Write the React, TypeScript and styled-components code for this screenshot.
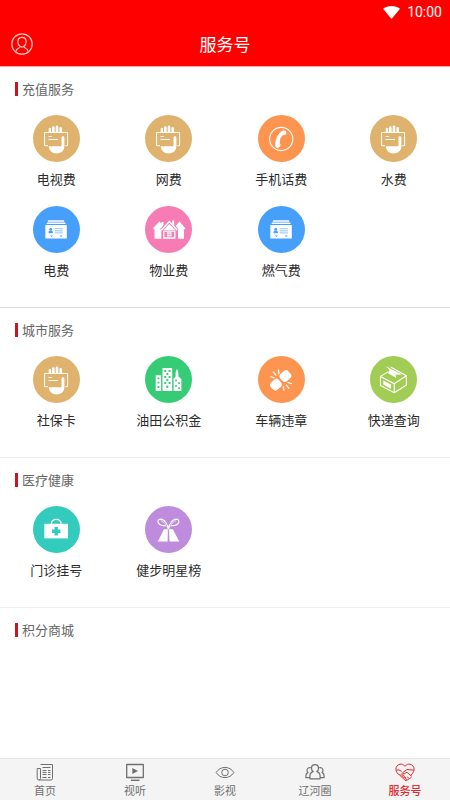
import React from "react";
import styled, { createGlobalStyle } from "styled-components";

const GlobalStyle = createGlobalStyle`
  *, *::before, *::after { box-sizing: border-box; }
  body {
    margin: 0;
    background: #fff;
    font-family: "Noto Sans CJK SC", "Noto Sans", sans-serif;
  }
  button { font: inherit; border: 0; padding: 0; background: none; cursor: pointer; }
  ul { list-style: none; margin: 0; padding: 0; }
`;

const Page = styled.div`
  min-height: 100vh;
  display: flex;
  flex-direction: column;
  background: #fff;
`;

const Header = styled.header`
  background: #ff0000;
  color: #fff;
  border-bottom: 1px solid #ffa9a2;
`;

const StatusBar = styled.div`
  display: flex;
  align-items: center;
  justify-content: flex-end;
  gap: 7px;
  height: 22px;
  padding: 2px 8px 0 0;
  font: 400 14px/20px Roboto, sans-serif;
`;

const TitleBar = styled.div`
  display: grid;
  grid-template-columns: 22px 1fr 22px;
  align-items: center;
  height: 44px;
  padding: 0 11px;
`;

const ProfileButton = styled.button`
  display: flex;
  color: #ffc4bc;
`;

const Title = styled.h1`
  margin: 0;
  text-align: center;
  font-size: 17px;
  line-height: 24px;
  font-weight: 400;
`;

const Main = styled.main`
  flex: 1;
`;

const Section = styled.section<{ $strong?: boolean }>`
  padding: 11px 0 26px;
  border-bottom: 1px solid ${(p) => (p.$strong ? "#dcdcdc" : "#ededed")};
  &:last-child { border-bottom: 0; }
`;

const SectionTitle = styled.h2`
  display: flex;
  align-items: center;
  gap: 4px;
  margin: 0;
  padding-left: 15px;
  font-size: 13px;
  line-height: 22px;
  font-weight: 400;
  color: #666;
  &::before {
    content: "";
    width: 3px;
    height: 14px;
    background: #cc1420;
  }
`;

const ServiceGrid = styled.ul`
  display: grid;
  grid-template-columns: repeat(4, 1fr);
  row-gap: 16px;
  margin-top: 15px;
`;

const ServiceButton = styled.button`
  display: flex;
  flex-direction: column;
  align-items: center;
  gap: 6px;
  width: 100%;
  font-size: 13px;
  line-height: 22px;
  color: #2b2b2b;
`;

const Disc = styled.span<{ $color: string }>`
  display: flex;
  width: 47px;
  height: 47px;
  border-radius: 50%;
  color: ${(p) => p.$color};
  background: ${(p) => p.$color};
`;

const TabBar = styled.nav`
  position: sticky;
  bottom: 0;
  display: grid;
  grid-template-columns: repeat(5, 1fr);
  height: 42px;
  background: #f4f4f4;
  border-top: 1px solid #e6e6e6;
`;

const Tab = styled.a<{ $active?: boolean }>`
  display: flex;
  flex-direction: column;
  align-items: center;
  padding-top: 4px;
  font-size: 11px;
  line-height: 16px;
  text-decoration: none;
  font-weight: ${(p) => (p.$active ? 500 : 400)};
  color: ${(p) => (p.$active ? "#e02b2f" : "#707070")};
`;

const Glyph = ({ children }: { children: React.ReactNode }) => (
  <svg width="47" height="47" viewBox="0 0 47 47" fill="#fff" aria-hidden="true">
    {children}
  </svg>
);

const CardHand = () => (
  <Glyph>
    <path d="M15.700 17v-3a1.200 1.200 0 0 1 2.400 0v3zM19 17v-4.400a1.300 1.300 0 0 1 2.600 0V17zM22.700 17v-5.200a1.300 1.300 0 0 1 2.600 0V17zM26.500 17v-3.900a1.200 1.200 0 0 1 2.400 0V17z" />
    <path d="M15.700 31.200H28.500V22.800a1.400 1.400 0 0 1 2.900 0V31c0 4.200-3 7.400-7.700 7.400s-7.600-3-8-7.200z" />
    <path d="M15 30.700H11.600V17.500H34.600V30.700H32.400" fill="none" stroke="#fff" strokeWidth="1" />
    <path d="M15.500 21.500h3.600M15.500 24.500h9.500" stroke="#fff" strokeWidth="1" />
  </Glyph>
);

const Phone = () => (
  <Glyph>
    <circle cx="23.200" cy="24" r="11.600" fill="none" stroke="#fff" strokeWidth="1.100" />
    <path d="M23.300 16.600c1.200-1.100 3.600-1.500 4.600-.6.700.8.500 2.500-.1 3.500-.7 1-2.400.2-3.300 1-1.900 1.700-2.900 4.600-2.700 7.200.1 1 1 1.300.7 2.500-.4 1.400-1.800 2.800-3.300 2.700-2.300-.4-2.400-4.200-1.300-8.100 1-3.500 3-6.600 5.400-8.200z" />
  </Glyph>
);

const IdBox = () => (
  <Glyph>
    <path d="M15.300 14.300h15.600l.6 1.400H14.600zM14.200 16.600h17.800l.8 1.500H13.400zM12.300 19h21.500v13.500H12.300z" />
    <g fill="currentColor">
      <circle cx="17.700" cy="23.300" r="1.400" />
      <path d="M15.600 27.300v-1.200c0-1 1-1.500 2.100-1.500s2.100.5 2.100 1.500v1.200zM17 29.400h3l-1.500 1.700zM26.700 29.400h3l-1.500 1.700z" />
    </g>
    <path d="M21.700 22.700h8.200M21.700 24.800h8.200M21.700 26.900h8.200" stroke="currentColor" strokeWidth=".8" opacity=".75" />
  </Glyph>
);

const Houses = () => (
  <Glyph>
    <path d="M7.800 22.600 14.300 15.600l2.200 2.100V16h2v3.800l1.400 1.600-3.600 3.800v7.500H9.500v-9.300zM40.500 22.600 34.600 15.600 30 20.500l3 3.300v8.900h6v-9.300z" />
    <path d="M16.300 24.300 24.300 15.600l8 8.700M28.300 19v-4.300" fill="none" stroke="currentColor" strokeWidth="3.400" />
    <path d="M16.300 24.300 24.300 15.600l8 8.700" fill="none" stroke="#fff" strokeWidth="1.500" />
    <path d="M27.200 14.400h2v5.500l-2-2.100zM18.500 24.100l5.800-6.100 5.800 6.100z" />
    <path d="M18.800 25.200h11v6.800h-11z" fill="none" stroke="#fff" strokeWidth="1.300" />
    <path d="M22 26.200h4.600v4.200H22z" />
    <path d="M24.300 26.200v4.200M22 28.300h4.600" stroke="currentColor" strokeWidth=".5" />
  </Glyph>
);

const Buildings = () => (
  <Glyph>
    <path d="M10.700 19.300h5.400V35h-5.400zM17.500 12h9.700v23h-9.700zM28.600 22.500l2-2v-4l1.400-3.700 1.400 3.700v4l3 2.500V35h-7.800z" />
    <g fill="currentColor">
      <path d="M12.600 21.500h1.800v1.800h-1.800zM12.600 25.800h1.800v1.800h-1.800zM12.600 30.100h1.800v1.800h-1.800z" />
      <path d="M19.300 14h1.900v1.900h-1.900zM23.600 14h1.900v1.900h-1.900zM21.400 17h1.900v1.900h-1.900zM19.300 20h1.900v1.900h-1.900zM23.600 20h1.900v1.900h-1.900zM21.400 23h1.900v1.900h-1.900zM19.300 26h1.900v1.900h-1.900zM23.600 26h1.900v1.900h-1.900zM21.400 29.500h1.900V32h-1.900z" />
      <path d="M30.200 23.500h1.700v1.700h-1.700zM33.200 26.300h1.700V28h-1.700zM30.200 29h1.700v1.700h-1.700zM33.200 31.300h1.700V33h-1.700z" />
    </g>
  </Glyph>
);

const Collision = () => (
  <Glyph>
    <rect x="22" y="15.300" width="10.800" height="9.600" rx="3.400" transform="rotate(-42 27.400 20.100)" />
    <rect x="12.500" y="23.900" width="10.800" height="9.600" rx="3.400" transform="rotate(-42 17.900 28.700)" />
    <path d="M12.800 20.700l3.100 1.200M15.300 16l2.600 3.200M20.500 14.200l.4 3.700M25.300 30.500l.5 3.600M28.300 29.200l2.700 3.200M30 26.500l3.400 1.100" stroke="#fff" strokeWidth="1.300" strokeLinecap="round" />
  </Glyph>
);

const Parcel = () => (
  <Glyph>
    <g fill="none" stroke="#fff" strokeWidth="1.100" strokeLinejoin="round">
      <path d="M10.500 20.400 24.300 27.800 36.400 19.700V29L24.300 36.800 10.500 29.500zM24.300 27.800v9" />
      <path d="M10.500 20.400l8-4.800M36.400 19.700 23.400 12.400l-2.800-1.500" />
      <path d="M15.700 10.300 32 18.500l-6.400.2.700 3.300-8.200-4.800 1.400-3.300z" fill="#fff" stroke="none" />
    </g>
    <path d="M13.300 24.400l7.700 4.100v4.200l-7.700-4.100z" />
  </Glyph>
);

const Medkit = () => (
  <Glyph>
    <path d="M18.300 18.300c0-3.200 2-5 4.900-5s4.900 1.800 4.900 5" fill="none" stroke="#fff" strokeWidth="1.300" />
    <path d="M11.300 17.800H35v14.600H11.300z" />
    <path d="M21.500 21h3.400v2.500h2.500v3.400h-2.500v2.500h-3.400v-2.500H19v-3.400h2.500z" fill="currentColor" />
  </Glyph>
);

const Gift = () => (
  <Glyph>
    <path d="M19 23.200h3.900l-.3 12.200H12.800zM24 23.200h3.900l6.300 12.200h-9.700z" />
    <g fill="none" stroke="#fff" strokeWidth="1.100">
      <path d="M23.400 23.200c-.5-4.400-3.700-10-7.900-10.100-2.600 0-3.400 2.700-1.700 4.600 2 2.300 5.200 2.200 7.400 2.100M23.400 23.200c.5-4.400 3.700-10 7.900-10.100 2.600 0 3.400 2.700 1.700 4.600-2 2.300-5.200 2.200-7.400 2.100" />
      <path d="M21.900 19.800l1.500 3.400 1.500-3.400M15.800 14.700c1.900.4 3.600 2 4.700 4M31 14.700c-1.900.4-3.600 2-4.700 4" strokeWidth=".7" />
    </g>
  </Glyph>
);

const ProfileIcon = () => (
  <svg width="22" height="22" viewBox="0 0 22 22" fill="none" stroke="currentColor" strokeWidth="1.200" aria-hidden="true">
    <circle cx="11" cy="11" r="10.200" />
    <path d="M11 4.400c-2.600 0-4.200 1.900-4.200 4.300 0 2 .9 3.600 2.200 4.500 0 1.300-.5 1.600-1.500 2.100-1.300.7-2.400 1.500-2.700 3M11 4.400c2.600 0 4.200 1.900 4.200 4.300 0 2-.9 3.600-2.200 4.500 0 1.300.5 1.600 1.500 2.100 1.300.7 2.400 1.500 2.700 3M9 13.200c1.200.9 2.800.9 4 0" />
  </svg>
);

const WifiIcon = () => (
  <svg width="17" height="13" viewBox="0 0 17 13" fill="#fff" aria-hidden="true">
    <path d="M0 2.800C4.800-.8 12.200-.8 17 2.800L8.500 13z" />
  </svg>
);

const TabIcon = ({ children }: { children: React.ReactNode }) => (
  <svg width="20" height="19" viewBox="0 0 20 19" fill="none" stroke="currentColor" strokeWidth="1" strokeLinejoin="round" aria-hidden="true">
    {children}
  </svg>
);

const NewsIcon = () => (
  <TabIcon>
    <path d="M5.500 1.500h12V15.500q0 1.500-1.500 1.500H4q-1.800 0-1.800-1.800V5.500h3.300v10q0 1.300-1.500 1.500" />
    <path d="M7.500 4.500h8M7.500 7.500h4M13 7.500h2.500M7.500 9.500h4M13 9.500h2.500M7.500 11.500h4M13 11.500h2.500M7.500 14.500h4M13 14.500h2.500" />
  </TabIcon>
);

const VideoIcon = () => (
  <TabIcon>
    <path d="M1.700 1.500h16.600v13H1.700z" strokeWidth="1.300" />
    <path d="M7.300 4.900v6l5.700-3z" fill="currentColor" stroke="none" />
    <path d="M6 17.300h8.500" strokeWidth="1.400" />
  </TabIcon>
);

const EyeIcon = () => (
  <TabIcon>
    <path d="M1.200 9.500C3.200 6.200 6.300 4.400 10 4.400s6.800 1.800 8.800 5.100c-2 3.300-5.100 5.100-8.800 5.100s-6.800-1.800-8.800-5.100z" />
    <circle cx="10" cy="9.500" r="3.300" />
  </TabIcon>
);

const PeopleIcon = () => (
  <TabIcon>
    <g strokeWidth="1.200">
      <path d="M8.200 8.600C7 7.800 6.500 6.500 6.500 5.200 6.500 3 8 1.600 10 1.600s3.500 1.400 3.500 3.600c0 1.300-.5 2.600-1.700 3.400 2 .6 3.300 2.200 3.300 4.500v2.700H4.900v-2.700c0-2.300 1.300-3.900 3.300-4.500z" />
      <path d="M5.800 4.700C3.600 4.200 2 5.500 2 7.300c0 .9.400 1.600 1 2.100-1.300.7-2.100 1.900-2.100 3.300v2h4M14.200 4.700c2.200-.5 3.800.8 3.800 2.600 0 .9-.4 1.600-1 2.100 1.300.7 2.100 1.900 2.100 3.300v2h-4" />
    </g>
  </TabIcon>
);

const HeartHandsIcon = () => (
  <TabIcon>
    <path d="M10 3.400C8.500 1.300 6.700.8 5 1.200 2.600 1.700.9 3.700.9 6.100c0 2 .9 3.500 2.100 4.800M10 3.400c1.500-2.100 3.300-2.600 5-2.200 2.400.5 4.100 2.500 4.100 4.900 0 2-.9 3.500-2.100 4.800" />
    <path d="M1.200 7.200 4 6.900l2.700 1.500M18.800 7.200 16 6.900l-4-.4-4.600 3.300c.6 1.500 2.200 1.300 3.300.1l1.200-.6 5 4M3 10.900l2.300 1.400M17 10.900l-.8 1.600" />
    <path d="M5.300 12.300l1.500-1.500 1 .8-1.800 2zM6.600 14.300l1.800-2 1.100.8-1.700 2zM8.500 16l1.500-1.900 1.100.8-1.300 2zM10 17.200l1.200.6 1-.8M12.200 17l-1-1M14.200 15.600l-2-1.800M12.200 17c1 0 1.800-.6 2-1.400 1 0 1.700-.5 1.900-1.400" strokeWidth=".9" />
  </TabIcon>
);

const TAN = "#dfb26d";
const ORANGE = "#fd9450";
const BLUE = "#469ffb";

type Service = { label: string; color: string; Icon: () => React.JSX.Element };

const sections: { title: string; strong?: boolean; items: Service[] }[] = [
  {
    title: "充值服务",
    strong: true,
    items: [
      { label: "电视费", color: TAN, Icon: CardHand },
      { label: "网费", color: TAN, Icon: CardHand },
      { label: "手机话费", color: ORANGE, Icon: Phone },
      { label: "水费", color: TAN, Icon: CardHand },
      { label: "电费", color: BLUE, Icon: IdBox },
      { label: "物业费", color: "#f77cb4", Icon: Houses },
      { label: "燃气费", color: BLUE, Icon: IdBox },
    ],
  },
  {
    title: "城市服务",
    items: [
      { label: "社保卡", color: TAN, Icon: CardHand },
      { label: "油田公积金", color: "#36cc76", Icon: Buildings },
      { label: "车辆违章", color: ORANGE, Icon: Collision },
      { label: "快递查询", color: "#a2cd54", Icon: Parcel },
    ],
  },
  {
    title: "医疗健康",
    items: [
      { label: "门诊挂号", color: "#33cbbd", Icon: Medkit },
      { label: "健步明星榜", color: "#bf8cdd", Icon: Gift },
    ],
  },
  { title: "积分商城", items: [] },
];

const tabs = [
  { label: "首页", href: "#home", Icon: NewsIcon },
  { label: "视听", href: "#media", Icon: VideoIcon },
  { label: "影视", href: "#film", Icon: EyeIcon },
  { label: "辽河圈", href: "#circle", Icon: PeopleIcon },
  { label: "服务号", href: "#services", Icon: HeartHandsIcon, active: true },
];

export default function App() {
  return (
    <Page>
      <GlobalStyle />
      <Header>
        <StatusBar>
          <WifiIcon />
          <span>10:00</span>
        </StatusBar>
        <TitleBar>
          <ProfileButton type="button" aria-label="个人中心">
            <ProfileIcon />
          </ProfileButton>
          <Title>服务号</Title>
        </TitleBar>
      </Header>
      <Main>
        {sections.map(({ title, strong, items }) => (
          <Section key={title} $strong={strong}>
            <SectionTitle>{title}</SectionTitle>
            {items.length > 0 && (
              <ServiceGrid>
                {items.map(({ label, color, Icon }) => (
                  <li key={label}>
                    <ServiceButton type="button">
                      <Disc $color={color}>
                        <Icon />
                      </Disc>
                      {label}
                    </ServiceButton>
                  </li>
                ))}
              </ServiceGrid>
            )}
          </Section>
        ))}
      </Main>
      <TabBar>
        {tabs.map(({ label, href, Icon, active }) => (
          <Tab key={label} href={href} $active={active} aria-current={active ? "page" : undefined}>
            <Icon />
            {label}
          </Tab>
        ))}
      </TabBar>
    </Page>
  );
}
